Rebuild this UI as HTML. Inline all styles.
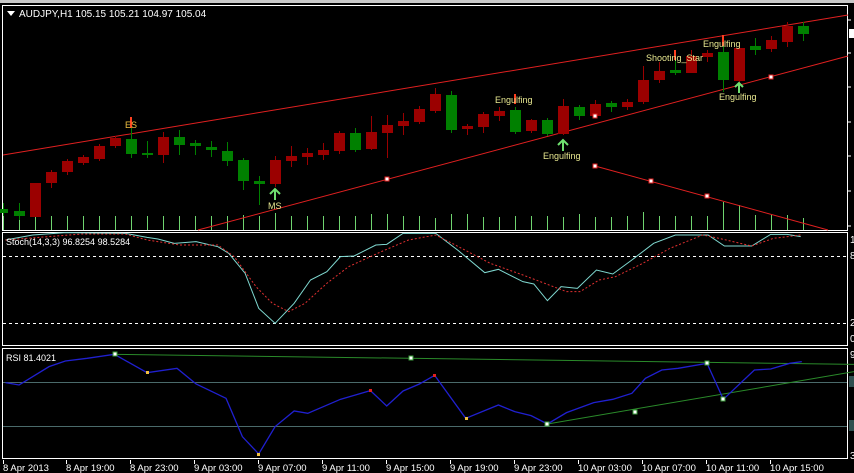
<!DOCTYPE html>
<html><head><meta charset="utf-8"><style>
html,body{margin:0;padding:0;background:#000;width:854px;height:473px;overflow:hidden}
svg{display:block}
text{font-family:"Liberation Sans",sans-serif}
</style></head><body>
<svg width="854" height="473" viewBox="0 0 854 473" xmlns="http://www.w3.org/2000/svg">
<rect x="0" y="0" width="854" height="473" fill="#000"/>
<rect x="0" y="0" width="854" height="3" fill="#c8c8c8"/>
<!-- panel borders -->
<g fill="none" stroke="#fff" stroke-width="1">
<rect x="2.5" y="5.5" width="845" height="225"/>
<rect x="2.5" y="232.5" width="845" height="113"/>
<rect x="2.5" y="348.5" width="845" height="110"/>
</g>
<!-- right scale ticks -->
<g stroke="#fff"><line x1="848" y1="20" x2="851" y2="20"/><line x1="848" y1="53" x2="851" y2="53"/><line x1="848" y1="87" x2="851" y2="87"/><line x1="848" y1="122" x2="851" y2="122"/><line x1="848" y1="156" x2="851" y2="156"/><line x1="848" y1="191" x2="851" y2="191"/><line x1="848" y1="226" x2="851" y2="226"/></g>
<rect x="849" y="29" width="5" height="9" fill="#fff"/>
<g fill="#fff" font-size="10"><text x="850" y="243">1</text><text x="850" y="259">8</text><text x="850" y="326">2</text><text x="850" y="342">0</text><text x="850" y="358">9</text><text x="850" y="459">3</text></g>
<rect x="849" y="376" width="5" height="11" fill="#2f4f4f"/><rect x="849" y="420" width="5" height="11" fill="#2f4f4f"/>

<!-- volume -->
<g stroke="#6fd46f" stroke-width="1">
<path d="M3.5 230V203M19.5 230V216M35.5 230V216M51.5 230V216M67.5 230V216M83.5 230V216M99.5 230V216M115.5 230V216M131.5 230V216M147.5 230V216M163.5 230V216M179.5 230V216M195.5 230V216M211.5 230V216M227.5 230V216M243.5 230V215M259.5 230V216M275.5 230V213M291.5 230V216M307.5 230V216M323.5 230V216M339.5 230V216M355.5 230V216M371.5 230V214M387.5 230V214M403.5 230V216M419.5 230V216M435.5 230V218M451.5 230V214M467.5 230V214M483.5 230V217M499.5 230V217M515.5 230V216M531.5 230V216M547.5 230V216M563.5 230V217M579.5 230V214M595.5 230V217M611.5 230V217M627.5 230V216M643.5 230V212M659.5 230V216M675.5 230V216M691.5 230V216M707.5 230V216M723.5 230V202M739.5 230V205M755.5 230V215M771.5 230V215M787.5 230V215M803.5 230V218"/>
</g>

<!-- channel lines -->
<g stroke="#e02020" stroke-width="1" fill="none">
<line x1="3" y1="155" x2="848" y2="15"/>
<line x1="198" y1="230" x2="848" y2="56"/>
<line x1="595" y1="166" x2="828" y2="230"/>
</g>

<!-- candles -->
<g stroke="#008000" fill="#008000">
<path d="M3.5 203V216M19.5 203V220M131.5 117V158M147.5 141V158M179.5 130V155M195.5 140V155M211.5 141V157M227.5 142V166M243.5 158V190M259.5 176V205M355.5 128V152M451.5 91V133M515.5 107V134M547.5 118V136M579.5 105V120M611.5 101V112M675.5 50V75M723.5 43V92M755.5 38V55M803.5 22V41" fill="none"/>
<rect x="0" y="209" width="8" height="4" stroke="none"/>
<rect x="14" y="211" width="11" height="5" stroke="none"/>
<rect x="126" y="139" width="11" height="15" stroke="none"/>
<rect x="142" y="153" width="11" height="2" stroke="none"/>
<rect x="174" y="137" width="11" height="8" stroke="none"/>
<rect x="190" y="143" width="11" height="3" stroke="none"/>
<rect x="206" y="147" width="11" height="3" stroke="none"/>
<rect x="222" y="151" width="11" height="10" stroke="none"/>
<rect x="238" y="160" width="11" height="21" stroke="none"/>
<rect x="254" y="181" width="11" height="3" stroke="none"/>
<rect x="350" y="133" width="11" height="17" stroke="none"/>
<rect x="446" y="95" width="11" height="35" stroke="none"/>
<rect x="510" y="110" width="11" height="22" stroke="none"/>
<rect x="542" y="120" width="11" height="14" stroke="none"/>
<rect x="574" y="107" width="11" height="9" stroke="none"/>
<rect x="606" y="103" width="11" height="4" stroke="none"/>
<rect x="670" y="70" width="11" height="3" stroke="none"/>
<rect x="718" y="52" width="11" height="28" stroke="none"/>
<rect x="750" y="46" width="11" height="4" stroke="none"/>
<rect x="798" y="26" width="11" height="8" stroke="none"/>
</g>
<g stroke="#9b0000" fill="#9b0000">
<path d="M35.5 183V217M51.5 170V188M67.5 159V175M83.5 155V165M99.5 144V161M115.5 136V148M163.5 132V163M275.5 156V187M291.5 146V167M307.5 148V165M323.5 143V160M339.5 131V154M371.5 116V150M387.5 115V158M403.5 113V135M419.5 106V124M435.5 88V113M467.5 124V135M483.5 112V133M499.5 107V121M531.5 119V133M563.5 99V135M595.5 100V117M627.5 99V110M643.5 66V104M659.5 62V83M691.5 50V73M707.5 50V62M739.5 45V85M771.5 36V52M787.5 22V47" fill="none"/>
<rect x="30" y="183" width="11" height="34" stroke="none"/>
<rect x="46" y="172" width="11" height="11" stroke="none"/>
<rect x="62" y="161" width="11" height="11" stroke="none"/>
<rect x="78" y="157" width="11" height="6" stroke="none"/>
<rect x="94" y="146" width="11" height="13" stroke="none"/>
<rect x="110" y="138" width="11" height="8" stroke="none"/>
<rect x="158" y="137" width="11" height="18" stroke="none"/>
<rect x="270" y="160" width="11" height="24" stroke="none"/>
<rect x="286" y="156" width="11" height="5" stroke="none"/>
<rect x="302" y="153" width="11" height="4" stroke="none"/>
<rect x="318" y="150" width="11" height="5" stroke="none"/>
<rect x="334" y="133" width="11" height="18" stroke="none"/>
<rect x="366" y="132" width="11" height="17" stroke="none"/>
<rect x="382" y="125" width="11" height="8" stroke="none"/>
<rect x="398" y="121" width="11" height="5" stroke="none"/>
<rect x="414" y="109" width="11" height="13" stroke="none"/>
<rect x="430" y="94" width="11" height="17" stroke="none"/>
<rect x="462" y="126" width="11" height="3" stroke="none"/>
<rect x="478" y="114" width="11" height="13" stroke="none"/>
<rect x="494" y="111" width="11" height="5" stroke="none"/>
<rect x="526" y="120" width="11" height="11" stroke="none"/>
<rect x="558" y="106" width="11" height="28" stroke="none"/>
<rect x="590" y="104" width="11" height="12" stroke="none"/>
<rect x="622" y="102" width="11" height="5" stroke="none"/>
<rect x="638" y="80" width="11" height="22" stroke="none"/>
<rect x="654" y="71" width="11" height="9" stroke="none"/>
<rect x="686" y="56" width="11" height="17" stroke="none"/>
<rect x="702" y="53" width="11" height="4" stroke="none"/>
<rect x="734" y="48" width="11" height="33" stroke="none"/>
<rect x="766" y="40" width="11" height="9" stroke="none"/>
<rect x="782" y="26" width="11" height="16" stroke="none"/>
</g>

<!-- markers -->
<g fill="#fff" stroke="#e02020" stroke-width="1">
<rect x="385" y="177" width="4" height="4"/>
<rect x="593" y="114" width="4" height="4"/>
<rect x="593" y="164" width="4" height="4"/>
<rect x="649" y="179" width="4" height="4"/>
<rect x="705" y="194" width="4" height="4"/>
<rect x="769" y="75" width="4" height="4"/>
</g>

<!-- pattern arrows -->
<g stroke="#6fe06f" stroke-width="2" fill="none">
<path d="M275 200V189M270 194L275 189L280 194"/>
<path d="M563 151V140M558 145L563 140L568 145"/>
<path d="M739 93V83M735 87L739 83L743 87"/>
</g>
<g stroke="#ff4020" stroke-width="2" fill="none">
<path d="M131 117V128"/><path d="M515 94V104"/><path d="M675 50V60"/><path d="M723 35V46"/>
</g>
<g fill="#e8e890" font-size="9">
<text x="125" y="128" fill="#f0c040">ES</text>
<text x="268" y="209">MS</text>
<text x="495" y="103">Engulfing</text>
<text x="543" y="159">Engulfing</text>
<text x="646" y="61">Shooting_Star</text>
<text x="703" y="47">Engulfing</text>
<text x="719" y="100">Engulfing</text>
</g>
<path d="M7 11L15 11L11 16Z" fill="#fff"/>
<text x="19" y="17" fill="#fff" font-size="10">AUDJPY,H1  105.15 105.21 104.97 105.04</text>

<!-- Stochastic -->
<g stroke="#fff" stroke-dasharray="3,3" stroke-width="1"><line x1="3" y1="256.5" x2="847" y2="256.5"/><line x1="3" y1="323.5" x2="847" y2="323.5"/></g>
<g transform="translate(0,230) scale(0.5447,0.3333)" fill="none">
<polyline vector-effect="non-scaling-stroke" stroke="#7fd8d0" stroke-width="1" points="10,30 60,15 120,8 230,10 270,22 290,27 320,40 360,35 400,50 420,70 450,130 475,235 505,280 540,220 570,150 600,125 625,80 650,78 690,45 710,43 740,10 800,10 840,60 890,128 915,118 960,155 980,162 1005,212 1030,170 1060,175 1095,120 1125,132 1160,90 1200,40 1240,15 1300,15 1330,48 1380,48 1415,13 1445,13 1470,20"/>
<polyline vector-effect="non-scaling-stroke" stroke="#e03030" stroke-width="1" stroke-dasharray="2,2" points="10,30 150,12 230,12 270,30 330,45 400,45 430,80 470,170 500,220 530,245 560,220 600,160 640,110 700,65 750,30 800,15 830,40 900,100 960,135 1000,160 1040,185 1065,185 1100,150 1130,140 1180,100 1230,55 1290,15 1320,25 1380,48 1420,25 1470,15"/>
</g>
<text x="6" y="245" fill="#fff" font-size="9">Stoch(14,3,3) 96.8254 98.5284</text>

<!-- RSI -->
<g stroke="#4a6a6a" stroke-width="1"><line x1="3" y1="382.5" x2="847" y2="382.5"/><line x1="3" y1="426.5" x2="847" y2="426.5"/></g>
<g transform="translate(0,230) scale(0.5447,0.3333)" fill="none">
<polyline vector-effect="non-scaling-stroke" stroke="#2a8a2a" stroke-width="1" points="210,373 1568,403"/>
<polyline vector-effect="non-scaling-stroke" stroke="#2a8a2a" stroke-width="1" points="1005,582 1568,425"/>
<polyline vector-effect="non-scaling-stroke" stroke="#2020d0" stroke-width="1.3" points="10,458 35,465 90,410 120,393 160,385 210,373 270,428 325,415 360,462 415,505 445,620 475,672 505,590 540,543 565,550 625,508 680,482 710,528 740,483 770,462 798,436 855,565 915,525 945,545 975,557 1005,582 1040,548 1090,518 1125,508 1160,490 1185,445 1215,420 1245,415 1298,400 1328,508 1385,420 1415,417 1450,400 1472,395"/>
</g>
<g fill="#fff" stroke="#3a9a3a" stroke-width="1">
<rect x="113" y="352" width="4" height="4"/><rect x="409" y="356" width="4" height="4"/><rect x="705" y="361" width="4" height="4"/>
<rect x="545" y="422" width="4" height="4"/><rect x="633" y="410" width="4" height="4"/><rect x="721" y="397" width="4" height="4"/>
</g>
<g fill="#f0c040"><rect x="146" y="371" width="3" height="3"/><rect x="257" y="453" width="3" height="3"/><rect x="465" y="417" width="3" height="3"/></g>
<g fill="#e02020"><rect x="369" y="389" width="3" height="3"/><rect x="433" y="374" width="3" height="3"/></g>
<text x="6" y="361" fill="#fff" font-size="9">RSI 81.4021</text>

<!-- time axis -->
<g stroke="#fff"><path d="M3.5 460V464M66.5 460V464M130.5 460V464M194.5 460V464M258.5 460V464M322.5 460V464M386.5 460V464M450.5 460V464M514.5 460V464M578.5 460V464M642.5 460V464M706.5 460V464M770.5 460V464"/></g>
<g fill="#fff" font-size="9.5">
<text x="3" y="471">8 Apr 2013</text><text x="66" y="471">8 Apr 19:00</text><text x="130" y="471">8 Apr 23:00</text><text x="194" y="471">9 Apr 03:00</text><text x="258" y="471">9 Apr 07:00</text><text x="322" y="471">9 Apr 11:00</text><text x="386" y="471">9 Apr 15:00</text><text x="450" y="471">9 Apr 19:00</text><text x="514" y="471">9 Apr 23:00</text><text x="578" y="471">10 Apr 03:00</text><text x="642" y="471">10 Apr 07:00</text><text x="706" y="471">10 Apr 11:00</text><text x="770" y="471">10 Apr 15:00</text>
</g>
</svg>
</body></html>
